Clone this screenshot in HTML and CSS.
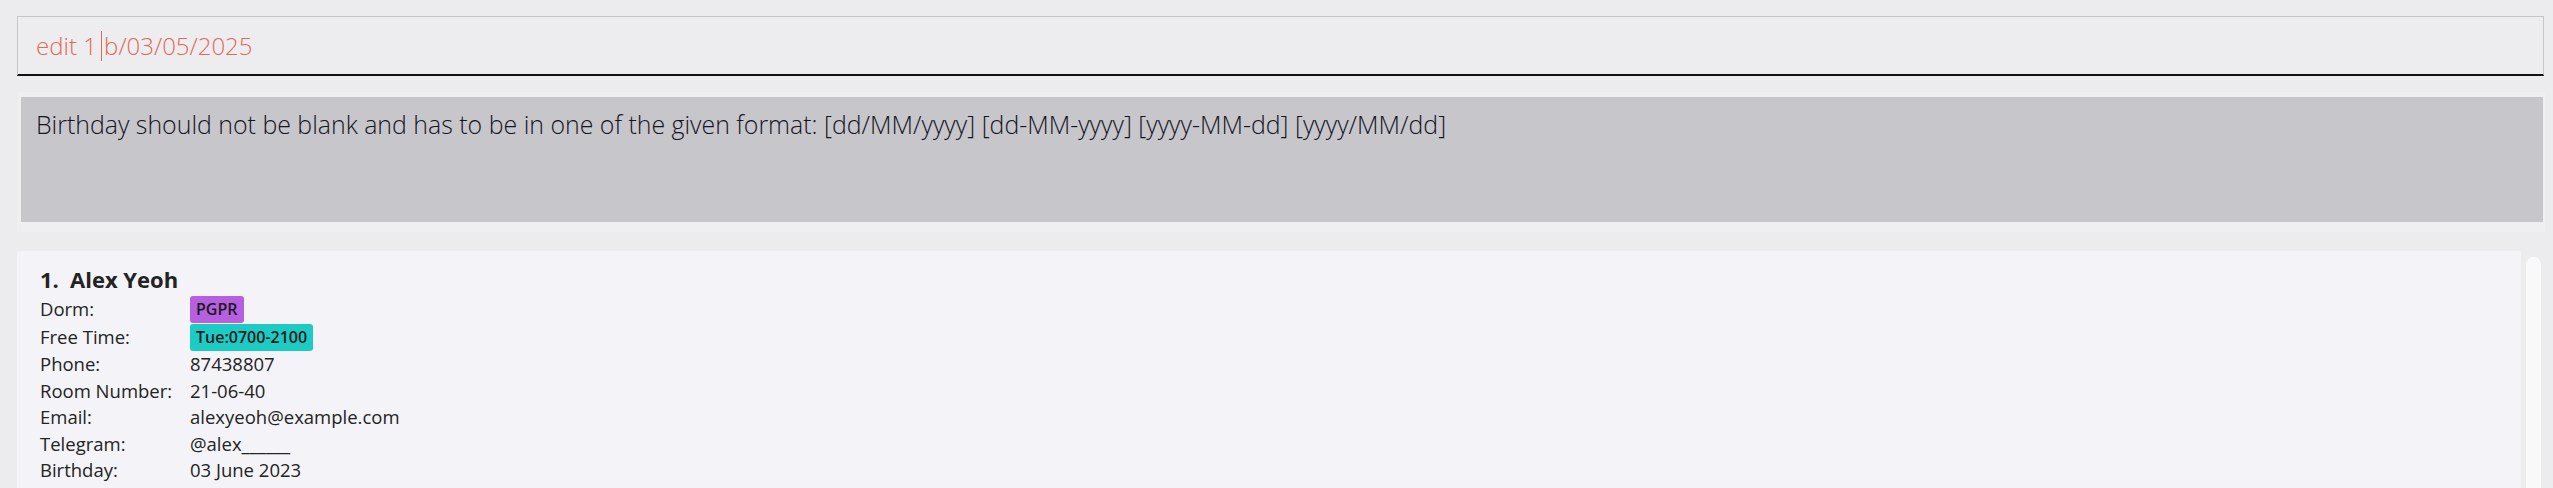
FILE: index.html
```html
<!DOCTYPE html>
<html>
<head>
<meta charset="utf-8">
<link rel="stylesheet" href="styles.css">
</head>
<body>
<div class="app">
  <div class="command-panel">
    <div class="command-box">
      <span class="cmd-text">edit 1 </span><span class="caret"></span><span class="cmd-text">b/03/05/2025</span>
    </div>
  </div>
  <div class="result-panel">
    <div class="result-box">Birthday should not be blank and has to be in one of the given format: [dd/MM/yyyy] [dd-MM-yyyy] [yyyy-MM-dd] [yyyy/MM/dd]</div>
  </div>
  <div class="list-panel">
    <div class="card">
      <div class="name"><span class="idx">1.</span>Alex Yeoh</div>
      <div class="fields">
        <div class="label row-tag">Dorm:</div><div class="value row-tag"><span class="tag tag-dorm">PGPR</span></div>
        <div class="label row-tag">Free Time:</div><div class="value row-tag"><span class="tag tag-time">Tue:0700-2100</span></div>
        <div class="label">Phone:</div><div class="value">87438807</div>
        <div class="label">Room Number:</div><div class="value">21-06-40</div>
        <div class="label">Email:</div><div class="value">alexyeoh@example.com</div>
        <div class="label">Telegram:</div><div class="value">@alex______</div>
        <div class="label">Birthday:</div><div class="value">03 June 2023</div>
      </div>
    </div>
    <div class="scrollbar"><div class="thumb"></div></div>
  </div>
</div>
</body>
</html>
```

FILE: styles.css
```css
html, body {
  margin: 0;
  padding: 0;
  height: 100%;
  overflow: hidden;
  background: #ececee;
}
.app {
  display: flex;
  flex-direction: column;
  font-family: "Open Sans", "Noto Sans", sans-serif;
}
.command-panel {
  padding: 16px 9px 0 17px;
  height: 76px;
  box-sizing: border-box;
}
.command-box {
  height: 60px;
  box-sizing: border-box;
  border: 1px solid #c6c6c8;
  border-bottom: 2px solid #111;
  background: #ededef;
  display: flex;
  align-items: center;
  padding-left: 18px;
  font-weight: 300;
  font-size: 24px;
  color: #e06a58;
}
.cmd-text { white-space: pre; }
.caret {
  width: 1px;
  height: 30px;
  margin-left: -2px;
  margin-right: 2px;
  background: #e06a58;
}
.result-panel {
  margin: 16px 8px 0 17px;
  padding: 5px 2px 10px 4px;
  background: #efeff1;
}
.result-box {
  height: 125px;
  box-sizing: border-box;
  background: #c7c6cb;
  padding: 10px 0 0 15px;
  font-weight: 300;
  font-size: 24.9px;
  color: #15151f;
}
.list-panel {
  margin-top: 19px;
  display: flex;
  padding-left: 17px;
}
.card {
  width: 2504px;
  height: 260px;
  background: #f3f3f8;
  padding: 12px 0 0 23px;
  box-sizing: border-box;
  color: #232323;
}
.name {
  font-weight: 700;
  font-size: 22px;
  line-height: 32px;
  display: flex;
}
.idx { width: 30px; }
.fields {
  display: grid;
  grid-template-columns: 150px 1fr;
  font-size: 18.5px;
  line-height: 26.5px;
}
.row-tag { line-height: 28px; height: 28px; }
.value { display: flex; align-items: center; }
.tag {
  display: inline-block;
  font-size: 16px;
  font-weight: 600;
  line-height: 27px;
  padding: 0 6px;
  border-radius: 3px;
  color: #1a1a1a;
}
.tag-dorm { background: #b65fe0; }
.tag-time { background: #1ccbc4; }
.scrollbar {
  margin-left: 5px;
  padding-top: 6px;
}
.thumb {
  width: 15px;
  height: 300px;
  background: #f9f9fa;
  border-radius: 7px;
}
```
